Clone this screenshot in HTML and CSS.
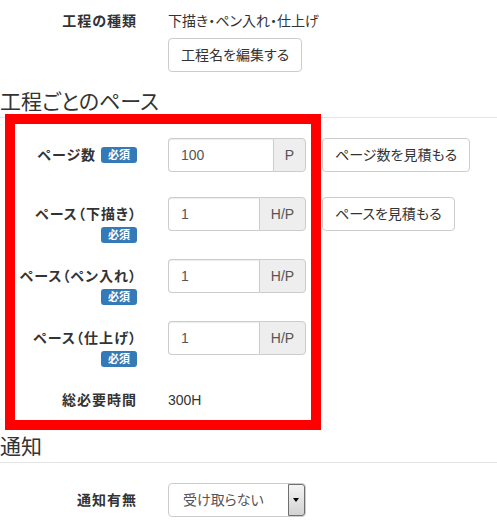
FILE: index.html
```html
<!DOCTYPE html>
<html lang="ja">
<head>
<meta charset="UTF-8" />
<meta name="viewport" content="width=device-width, initial-scale=1" />
<title>工程設定</title>
<link rel="stylesheet" href="styles.css">
</head>
<body>

<form class="form-horizontal">
  <div class="form-group">
    <label class="control-label">工程の種類</label>
    <div class="controls">
      <p class="form-static">下描き・ペン入れ・仕上げ</p>
      <button type="button" class="btn">工程名を編集する</button>
    </div>
  </div>

  <div class="section pace">
    <h3 class="legend">工程ごとのペース</h3>

    <div class="form-group form-group-first">
      <label class="control-label">ページ数 <span class="badge">必須</span></label>
      <div class="controls">
        <div class="input-group">
          <input type="text" class="form-control" value="100" />
          <span class="addon addon-p">P</span>
        </div>
        <button type="button" class="btn">ページ数を見積もる</button>
      </div>
    </div>

    <div class="form-group">
      <label class="control-label">ペース（下描き）<span class="badge badge-block">必須</span></label>
      <div class="controls">
        <div class="input-group">
          <input type="text" class="form-control" value="1" />
          <span class="addon">H/P</span>
        </div>
        <button type="button" class="btn">ペースを見積もる</button>
      </div>
    </div>

    <div class="form-group">
      <label class="control-label">ペース（ペン入れ）<span class="badge badge-block">必須</span></label>
      <div class="controls">
        <div class="input-group">
          <input type="text" class="form-control" value="1" />
          <span class="addon">H/P</span>
        </div>
      </div>
    </div>

    <div class="form-group">
      <label class="control-label">ペース（仕上げ）<span class="badge badge-block">必須</span></label>
      <div class="controls">
        <div class="input-group">
          <input type="text" class="form-control" value="1" />
          <span class="addon">H/P</span>
        </div>
      </div>
    </div>

    <div class="form-group">
      <label class="control-label">総必要時間</label>
      <div class="controls">
        <p class="form-static">300H</p>
      </div>
    </div>

    <div class="highlight"></div>
  </div>

  <div class="section notify">
    <h3 class="legend">通知</h3>
    <div class="form-group">
      <label class="control-label">通知有無</label>
      <div class="controls">
        <span class="select-wrap">
          <select class="form-select">
            <option>受け取らない</option>
            <option>受け取る</option>
          </select>
          <span class="select-arrow"></span>
        </span>
      </div>
    </div>
  </div>
</form>

</body>
</html>
```

FILE: styles.css
```css
body {
  margin: 0;
  padding: 0;
  background: #fff;
  color: #333;
  font-family: "Liberation Sans", "Noto Sans CJK JP", sans-serif;
  font-size: 14px;
  line-height: 20px;
  font-feature-settings: "palt";
}
.form-horizontal {
  padding-top: 4px;
  width: 497px;
}
.section {
  position: relative;
}
.legend {
  margin: 0 0 20px;
  font-size: 21px;
  font-weight: normal;
  line-height: 30px;
  color: #333;
  border-bottom: 1px solid #e5e5e5;
}
.form-group {
  display: flex;
  align-items: flex-start;
  margin-bottom: 15px;
}
.form-group-first {
  margin-bottom: 25px;
}
.control-label {
  flex: 0 0 137px;
  padding-top: 7px;
  text-align: right;
  font-weight: bold;
  letter-spacing: 1px;
  white-space: nowrap;
}
.controls {
  margin-left: 31px;
  display: flex;
  flex-wrap: wrap;
  align-items: flex-start;
  gap: 0 16px;
}
.form-static {
  margin: 0;
  padding: 7px 0;
  flex: 0 0 100%;
  white-space: nowrap;
}
.badge {
  display: inline-block;
  height: 16px;
  padding: 0 7px;
  background: #337ab7;
  color: #fff;
  font-size: 11px;
  line-height: 16px;
  font-weight: bold;
  letter-spacing: 0;
  border-radius: 3px;
  vertical-align: 1px;
}
.badge-block {
  display: table;
  margin: 3px 0 1px auto;
}
.btn,
.form-control,
.form-select {
  font-family: inherit;
  font-size: 14px;
  font-feature-settings: "palt";
}
.btn {
  height: 34px;
  padding: 6px 12px;
  line-height: 20px;
  color: #333;
  background: #fff;
  border: 1px solid #ccc;
  border-radius: 4px;
  cursor: pointer;
  white-space: nowrap;
}
.input-group {
  display: flex;
  width: 138px;
  height: 34px;
}
.form-control {
  flex: 1 1 auto;
  min-width: 0;
  height: 34px;
  padding: 6px 12px;
  box-sizing: border-box;
  color: #555;
  border: 1px solid #ccc;
  border-right: none;
  border-radius: 4px 0 0 4px;
  box-shadow: inset 0 1px 1px rgba(0,0,0,0.075);
}
.addon {
  flex: 0 0 47px;
  box-sizing: border-box;
  height: 34px;
  line-height: 32px;
  text-align: center;
  color: #555;
  background: #eee;
  border: 1px solid #ccc;
  border-radius: 0 4px 4px 0;
}
.addon-p {
  flex-basis: 33px;
}
.highlight {
  position: absolute;
  left: 5px;
  top: 27px;
  width: 296px;
  height: 296px;
  border: 10px solid #f00;
}
.notify {
  margin-top: 1px;
}
.select-wrap {
  position: relative;
  display: inline-block;
}
.form-select {
  appearance: none;
  -webkit-appearance: none;
  width: 138px;
  height: 34px;
  padding: 6px 14px;
  color: #555;
  background: #fff;
  border: 1px solid #ccc;
  border-radius: 4px;
}
.select-arrow {
  position: absolute;
  top: 1px;
  right: 1px;
  width: 17px;
  height: 32px;
  box-sizing: border-box;
  border: 1px solid #6f6f6f;
  border-radius: 0 3px 3px 0;
  background: linear-gradient(#f4f4f4, #d2d2d2);
  pointer-events: none;
}
.select-arrow::after {
  content: "";
  position: absolute;
  left: 4px;
  top: 13px;
  border-left: 3.5px solid transparent;
  border-right: 3.5px solid transparent;
  border-top: 4px solid #000;
}
```
